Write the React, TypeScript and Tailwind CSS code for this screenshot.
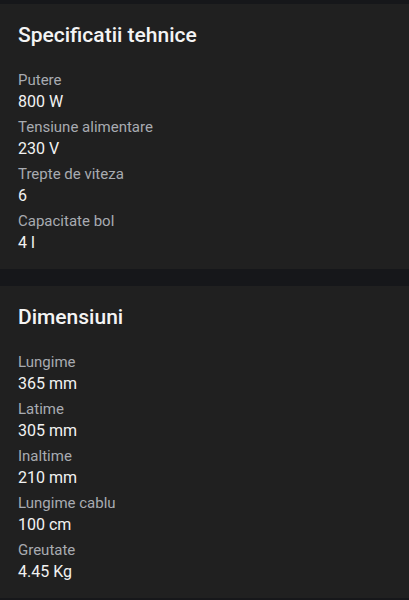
const specs = [
  { label: "Putere", value: "800 W" },
  { label: "Tensiune alimentare", value: "230 V" },
  { label: "Trepte de viteza", value: "6" },
  { label: "Capacitate bol", value: "4 l" },
];

const dims = [
  { label: "Lungime", value: "365 mm" },
  { label: "Latime", value: "305 mm" },
  { label: "Inaltime", value: "210 mm" },
  { label: "Lungime cablu", value: "100 cm" },
  { label: "Greutate", value: "4.45 Kg" },
];

function Section({ title, rows }: { title: string; rows: { label: string; value: string }[] }) {
  return (
    <section className="bg-[#202020] px-[18px] pt-[17px] pb-[14px]">
      <h2 className="h-[28px] text-[21px] leading-[28px] font-medium text-[#f4f4f4]">{title}</h2>
      <dl className="mt-[21px] flex flex-col gap-[3px]">
        {rows.map((r) => (
          <div key={r.label}>
            <dt className="h-[20px] text-[15px] leading-[20px] text-[#a8abb1]">{r.label}</dt>
            <dd className="h-[24px] text-[16px] leading-[24px] text-[#f2f2f2]">{r.value}</dd>
          </div>
        ))}
      </dl>
    </section>
  );
}

export default function App() {
  return (
    <div className="min-h-[600px] bg-[#16171a] pt-[4px] font-['Roboto',sans-serif]">
      <Section title="Specificatii tehnice" rows={specs} />
      <div className="h-[17px]" />
      <Section title="Dimensiuni" rows={dims} />
    </div>
  );
}
